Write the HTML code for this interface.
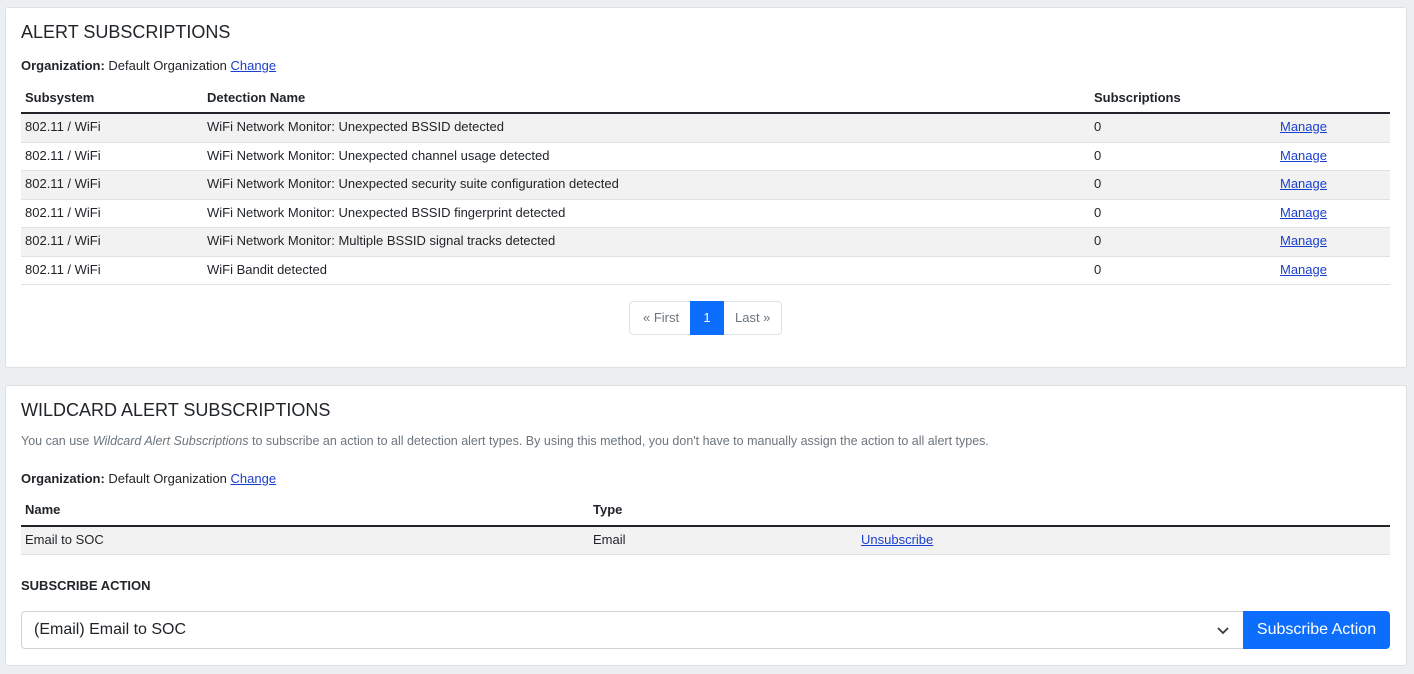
<!DOCTYPE html>
<html><head><meta charset="utf-8"><style>
*{box-sizing:border-box;margin:0;padding:0}
body{width:1414px;height:674px;background:#eceff1;font-family:"Liberation Sans",sans-serif;color:#212529;position:relative;overflow:hidden;font-size:13px}
.card{position:absolute;left:5px;width:1402px;background:#fff;border:1px solid #dde1e4;border-radius:3px}
.abs{position:absolute;white-space:nowrap}
h2{position:absolute;font-weight:400;font-size:18px;color:#212529;white-space:nowrap}
a{color:#1a3fcf;text-decoration:underline}
.row{position:absolute;left:15px;width:1369px;height:28.5px;border-bottom:1px solid #dee2e6}
.row.g{background:#f2f2f2}
.row span{position:absolute;top:5px;white-space:nowrap}
.hd{position:absolute;left:15px;width:1369px;border-bottom:2px solid #212529;font-weight:700}
.hd span{position:absolute;white-space:nowrap}
</style></head><body>
<div class="card" style="top:7px;height:361px">
<h2 style="left:15px;top:14px">ALERT SUBSCRIPTIONS</h2>
<div class="abs" style="left:15px;top:50px"><b>Organization:</b> Default Organization <a>Change</a></div>
<div class="hd" style="top:78px;height:28px"><span style="left:4px;top:4px">Subsystem</span><span style="left:186px;top:4px">Detection Name</span><span style="left:1073px;top:4px">Subscriptions</span></div>
<div class="row g" style="top:106px"><span style="left:4px">802.11 / WiFi</span><span style="left:186px">WiFi Network Monitor: Unexpected BSSID detected</span><span style="left:1073px">0</span><span style="left:1259px"><a>Manage</a></span></div>
<div class="row" style="top:134.5px"><span style="left:4px">802.11 / WiFi</span><span style="left:186px">WiFi Network Monitor: Unexpected channel usage detected</span><span style="left:1073px">0</span><span style="left:1259px"><a>Manage</a></span></div>
<div class="row g" style="top:163px"><span style="left:4px">802.11 / WiFi</span><span style="left:186px">WiFi Network Monitor: Unexpected security suite configuration detected</span><span style="left:1073px">0</span><span style="left:1259px"><a>Manage</a></span></div>
<div class="row" style="top:191.5px"><span style="left:4px">802.11 / WiFi</span><span style="left:186px">WiFi Network Monitor: Unexpected BSSID fingerprint detected</span><span style="left:1073px">0</span><span style="left:1259px"><a>Manage</a></span></div>
<div class="row g" style="top:220px"><span style="left:4px">802.11 / WiFi</span><span style="left:186px">WiFi Network Monitor: Multiple BSSID signal tracks detected</span><span style="left:1073px">0</span><span style="left:1259px"><a>Manage</a></span></div>
<div class="row" style="top:248.5px"><span style="left:4px">802.11 / WiFi</span><span style="left:186px">WiFi Bandit detected</span><span style="left:1073px">0</span><span style="left:1259px"><a>Manage</a></span></div>
<div class="abs" style="left:623px;top:293px;width:153px;height:34px;border:1px solid #dee2e6;border-radius:4px;color:#6c757d">
<span class="abs" style="left:13px;top:8px">« First</span>
<div class="abs" style="left:60px;top:-1px;width:34px;height:34px;background:#0d6efd;color:#fff;text-align:center;line-height:34px">1</div>
<span class="abs" style="left:105px;top:8px">Last »</span></div>
</div>
<div class="card" style="top:385px;height:281px">
<h2 style="left:15px;top:14px">WILDCARD ALERT SUBSCRIPTIONS</h2>
<div class="abs" style="left:15px;top:48px;color:#6c757d;font-size:12.5px">You can use <i>Wildcard Alert Subscriptions</i> to subscribe an action to all detection alert types. By using this method, you don't have to manually assign the action to all alert types.</div>
<div class="abs" style="left:15px;top:85px"><b>Organization:</b> Default Organization <a>Change</a></div>
<div class="hd" style="top:113px;height:28px"><span style="left:4px;top:3px">Name</span><span style="left:572px;top:3px">Type</span></div>
<div class="row g" style="top:141px;height:28px"><span style="left:4px">Email to SOC</span><span style="left:572px">Email</span><span style="left:840px"><a>Unsubscribe</a></span></div>
<div class="abs" style="left:15px;top:192px;font-weight:700">SUBSCRIBE ACTION</div>
<div class="abs" style="left:15px;top:225px;width:1223px;height:38px;border:1px solid #ced4da;border-radius:4px 0 0 4px;font-size:16px">
<span class="abs" style="left:12px;top:9px">(Email) Email to SOC</span>
<svg class="abs" style="left:1194px;top:13px" width="14" height="10" viewBox="0 0 14 10"><path d="M2 3l5 5 5-5" fill="none" stroke="#343a40" stroke-width="1.8"/></svg></div>
<div class="abs" style="left:1237px;top:225px;width:147px;height:38px;background:#0d6efd;color:#fff;border-radius:0 4px 4px 0;font-size:16px;text-align:center;line-height:38px">Subscribe Action</div>
</div>
<style>.row.g:last-of-type span:first-child{}</style>
</body></html>
